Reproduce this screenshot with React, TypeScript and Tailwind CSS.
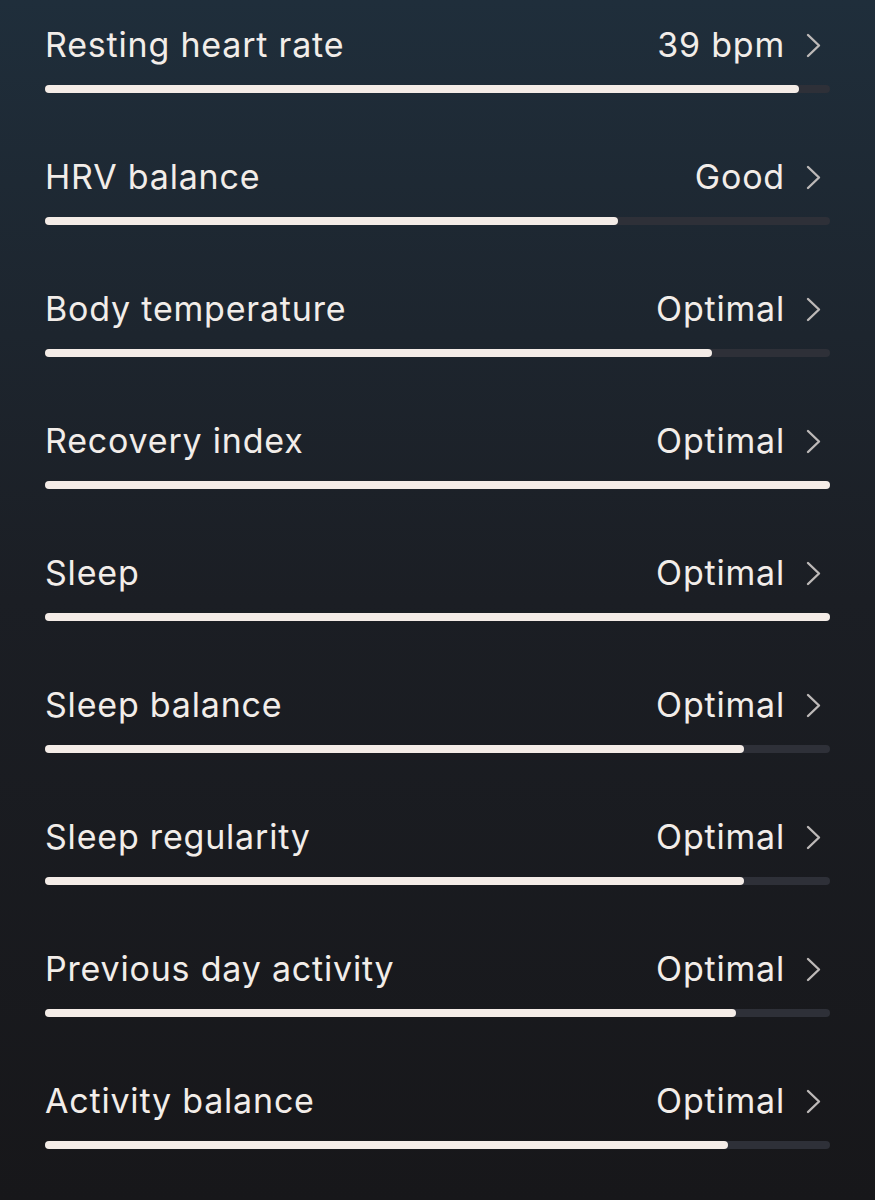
const rows = [
  { label: "Resting heart rate", value: "39 bpm", pct: 96 },
  { label: "HRV balance", value: "Good", pct: 73 },
  { label: "Body temperature", value: "Optimal", pct: 85 },
  { label: "Recovery index", value: "Optimal", pct: 100 },
  { label: "Sleep", value: "Optimal", pct: 100 },
  { label: "Sleep balance", value: "Optimal", pct: 89 },
  { label: "Sleep regularity", value: "Optimal", pct: 89 },
  { label: "Previous day activity", value: "Optimal", pct: 88 },
  { label: "Activity balance", value: "Optimal", pct: 87 },
];

const Chevron = () => (
  <svg width="15" height="25" viewBox="0 0 15 25" fill="none" className="shrink-0">
    <polyline
      points="2,2 13,12.5 2,23"
      stroke="#bdb9b8"
      strokeWidth="2.4"
      strokeLinecap="round"
      strokeLinejoin="round"
    />
  </svg>
);

const ContributorRow = ({
  label,
  value,
  pct,
}: {
  label: string;
  value: string;
  pct: number;
}) => (
  <div className="flex flex-col pb-[64px]">
    <div className="flex h-[40px] items-center justify-between pr-[9px] text-[34px] leading-[40px] tracking-[0.8px] text-[#f2ede9]">
      <span>{label}</span>
      <div className="flex items-center gap-[21px]">
        <span>{value}</span>
        <Chevron />
      </div>
    </div>
    <div className="mt-[20px] h-2 w-full rounded-full bg-[#2e3038]">
      <div
        className="h-2 rounded-full bg-[#f4ece7]"
        style={{ width: `${pct}%` }}
      />
    </div>
  </div>
);

export default function App() {
  return (
    <div
      className="h-[1200px] w-[875px] overflow-hidden bg-gradient-to-b from-[#1f2e3b] via-[#1b1e24] to-[#17171a] px-[45px] pt-[25px]"
      style={{ fontFamily: "Inter, 'Noto Sans', sans-serif" }}
    >
      {rows.map((r) => (
        <ContributorRow key={r.label} {...r} />
      ))}
    </div>
  );
}
